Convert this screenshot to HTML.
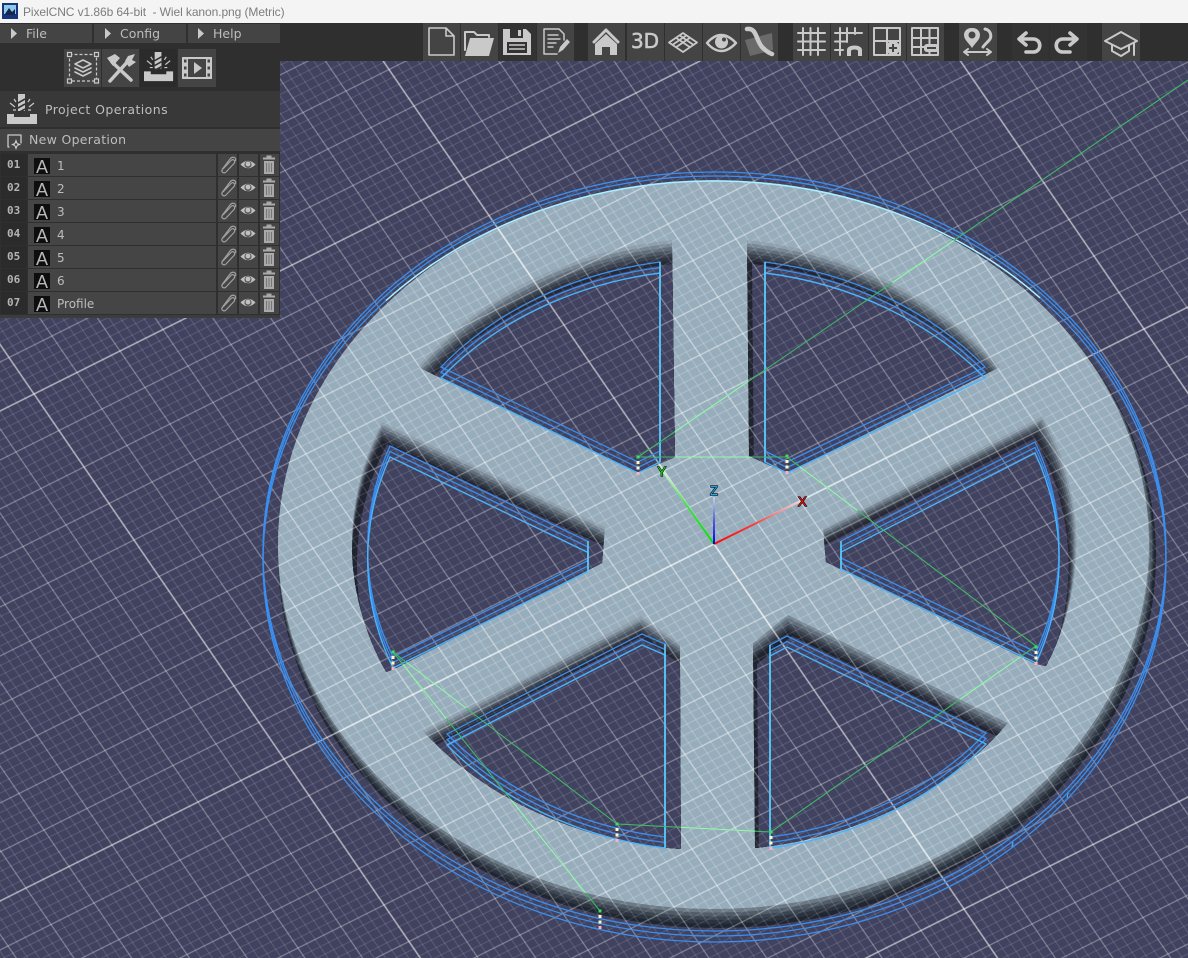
<!DOCTYPE html>
<html><head><meta charset="utf-8"><title>PixelCNC</title>
<style>
html,body{margin:0;padding:0;background:#40425f;overflow:hidden}
svg{display:block;position:absolute;left:0;top:0}
text{font-family:"DejaVu Sans","Liberation Sans",sans-serif;fill:#bdbdbd;font-size:12px}
.t{font-family:"Liberation Sans",sans-serif;fill:#7c7c7c;font-size:12px;white-space:pre;letter-spacing:-.08px}
.n{font-family:"DejaVu Sans Mono","Liberation Mono",monospace;font-weight:bold;font-size:11px;fill:#b4b4b4}
.ax{font-family:"Liberation Sans",sans-serif;font-size:13px;paint-order:stroke;stroke:#0a0a0a;stroke-width:1.2px}
.b{fill:#444}.d{fill:#333}
.ic{fill:none;stroke:#c9c9c9;stroke-width:2;stroke-linecap:round;stroke-linejoin:round}
.if{fill:#c9c9c9}
.w{fill:none;stroke:#3a8ff0;stroke-width:1.3}
.c{fill:none;stroke:#5cd0ff;stroke-width:1.5}
</style></head><body>
<svg width="1188" height="958" viewBox="0 0 1188 958" xmlns="http://www.w3.org/2000/svg">
<defs>
<path id="vm" d="M2 0V100M4 0V100M6 0V100M8 0V100M12 0V100M14 0V100M16 0V100M18 0V100M22 0V100M24 0V100M26 0V100M28 0V100M32 0V100M34 0V100M36 0V100M38 0V100M42 0V100M44 0V100M46 0V100M48 0V100M52 0V100M54 0V100M56 0V100M58 0V100M62 0V100M64 0V100M66 0V100M68 0V100M72 0V100M74 0V100M76 0V100M78 0V100M82 0V100M84 0V100M86 0V100M88 0V100M92 0V100M94 0V100M96 0V100M98 0V100" stroke="#fff" stroke-opacity=".15" stroke-width=".2" fill="none"/>
<path id="vd" d="M10 0V100M20 0V100M30 0V100M40 0V100M50 0V100M60 0V100M70 0V100M80 0V100M90 0V100" stroke="#fff" stroke-opacity=".34" stroke-width=".26" fill="none"/>
<path id="vj" d="M0 0V100M100 0V100" stroke="#fff" stroke-opacity=".6" stroke-width=".32" fill="none"/>
<pattern id="grid" patternUnits="userSpaceOnUse" width="100" height="100" patternTransform="matrix(4.3 -2.15 -2.5 -3.65 714 544)">
<use href="#vm"/><use href="#vm" transform="matrix(0 1 1 0 0 0)"/>
<use href="#vd"/><use href="#vd" transform="matrix(0 1 1 0 0 0)"/>
<use href="#vj"/><use href="#vj" transform="matrix(0 1 1 0 0 0)"/>
</pattern>
<path id="h1" d="M672 240A365 305 0 0 0 418 367L638 473L675 457Z"/>
<path id="h2" d="M747 240A365 305 0 0 1 1000 367L787 473L749 456Z"/>
<path id="h3" d="M382 422A365 305 0 0 0 386 672L394 669L602 563L605 527Z"/>
<path id="h4" d="M1043 416A365 305 0 0 1 1046 666L1036 664L826 562L823 528Z"/>
<path id="h5" d="M641 616L680 643L681 849A365 305 0 0 1 423 731Z"/>
<path id="h6" d="M788 615L753 643L755 848A365 305 0 0 0 1008 723Z"/>
<clipPath id="c1"><use href="#h1"/></clipPath>
<clipPath id="c2"><use href="#h2"/></clipPath>
<clipPath id="c3"><use href="#h3"/></clipPath>
<clipPath id="c4"><use href="#h4"/></clipPath>
<clipPath id="c5"><use href="#h5"/></clipPath>
<clipPath id="c6"><use href="#h6"/></clipPath>
<clipPath id="top"><path clip-rule="evenodd" d="M278 544.5A435.5 364.5 0 1 1 1149 544.5A435.5 364.5 0 1 1 278 544.5ZM672 240A365 305 0 0 0 418 367L638 473L675 457ZM747 240A365 305 0 0 1 1000 367L787 473L749 456ZM382 422A365 305 0 0 0 386 672L394 669L602 563L605 527ZM1043 416A365 305 0 0 1 1046 666L1036 664L826 562L823 528ZM641 616L680 643L681 849A365 305 0 0 1 423 731ZM788 615L753 643L755 848A365 305 0 0 0 1008 723Z"/></clipPath>
<path id="w1" d="M660 273A350 292 0 0 0 441 378L638 473L660 462Z"/>
<path id="w2" d="M765 273A350 292 0 0 1 985 378L787 473L765 462Z"/>
<path id="w3" d="M393 668A345 289 0 0 1 390 457L588 552.5V571.5Z"/>
<path id="w4" d="M1036 663A345 289 0 0 0 1035 453L841 552V569Z"/>
<path id="w5" d="M665 848A345 289 0 0 1 447 745L642 645L665 655Z"/>
<path id="w6" d="M770 848A345 289 0 0 0 986 744L787 647L770 656Z"/>
<g id="dots"><rect x="-1.500" y="-1.500" width="3" height="3" fill="#3be060"/><rect x="-1.500" y="4" width="3" height="3" fill="#fff7c8"/><rect x="-1.500" y="9.500" width="3" height="3" fill="#fff7c8"/><rect x="-1.500" y="15" width="3" height="3" fill="#ffb0c0"/></g>
<linearGradient id="gr" gradientUnits="userSpaceOnUse" x1="714" y1="544" x2="803" y2="500"><stop offset="0" stop-color="#ff0000"/><stop offset=".45" stop-color="#f04040"/><stop offset="1" stop-color="#f0e0e4"/></linearGradient>
<linearGradient id="gg" gradientUnits="userSpaceOnUse" x1="714" y1="544" x2="662" y2="470"><stop offset="0" stop-color="#00e000"/><stop offset=".5" stop-color="#40e040"/><stop offset="1" stop-color="#d8f0dc"/></linearGradient>
<linearGradient id="gb" gradientUnits="userSpaceOnUse" x1="714" y1="544" x2="714" y2="497"><stop offset="0" stop-color="#0000f0"/><stop offset=".5" stop-color="#5060d8"/><stop offset="1" stop-color="#c8d4e8"/></linearGradient>

<g id="mill">
<path class="if" d="M11 0H18V17H11Z"/>
<path d="M11 9L18 5M11 14L18 10M11 19L18 15" stroke="#333" stroke-width="1.6" fill="none"/>
<path d="M3 9L8 13M27 9L22 13M6 16H9M24 16H21M7 5L9 8M23 5L21 8" stroke="#c9c9c9" stroke-width="1.2" fill="none"/>
<path class="if" d="M0 20H7V23H23V20H30V30H0Z"/>
</g>
<g id="row">
<rect x="1" y="0" width="26" height="22" fill="#2b2b2b"/>
<rect x="28" y="0" width="188" height="22" fill="#454545"/>
<rect x="218" y="0" width="19" height="22" fill="#454545"/>
<rect x="239" y="0" width="19" height="22" fill="#454545"/>
<rect x="260" y="0" width="19" height="22" fill="#454545"/>
<rect x="34" y="4" width="16" height="16" fill="#0e0e0e"/>
<text x="42" y="19" text-anchor="middle" style="font-family:'Liberation Sans',sans-serif;font-size:18px;fill:#b8b8b8">A</text>
<path d="M223 15L231 6.500C233 4.500 236 6.500 234 9.500L226 18C224 20 220.500 18 222.500 15L230 5C232 2 237 3 235.500 7" fill="none" stroke="#a0a0a0" stroke-width="1.200"/>
<path d="M240.500 10.500Q248 3 255.500 10.500Q248 18 240.500 10.500Z" fill="#c0c0c0"/>
<circle cx="248" cy="10.500" r="3.600" fill="#5a5a5a"/><circle cx="248" cy="10" r="2.400" fill="#c0c0c0"/>
<path d="M266.500 1.500H271.500V3.500H275V5.500H263V3.500H266.500Z" fill="#aaa"/>
<path d="M264 7H274V20H264Z" fill="#aaa"/>
<path d="M266.500 9V18M269 9V18M271.500 9V18" stroke="#777" stroke-width="1" fill="none"/>
</g>
</defs>

<!-- scene -->
<rect width="1188" height="958" fill="#40425f"/>
<ellipse cx="717" cy="556" rx="439" ry="372" fill="#1f2632"/>
<ellipse cx="716" cy="553.500" rx="438" ry="370.500" fill="#2b333f"/>
<ellipse cx="715.500" cy="551" rx="437.500" ry="369" fill="#3b4551"/>
<ellipse cx="715" cy="549" rx="437" ry="367.500" fill="#505c68"/>
<ellipse cx="714" cy="546.600" rx="436" ry="366" fill="#6c7a86"/>
<ellipse cx="713.500" cy="544.500" rx="435.500" ry="364.500" fill="#98adbc"/>

<g clip-path="url(#c1)"><use href="#h1" fill="#8f9fac"/><use href="#h1" fill="#788794" transform="translate(.3 3.400)"/><use href="#h1" fill="#616e7b" transform="translate(.6 6.900)"/><use href="#h1" fill="#4c5663" transform="translate(.9 10.300)"/><use href="#h1" fill="#3b424f" transform="translate(1.100 13.700)"/><use href="#h1" fill="#2e323f" transform="translate(1.400 17.100)"/><use href="#h1" fill="#262935" transform="translate(1.700 20.600)"/><use href="#h1" fill="#40425f" transform="translate(2 24)"/></g>
<g clip-path="url(#c2)"><use href="#h2" fill="#8f9fac"/><use href="#h2" fill="#788794" transform="translate(0 3.400)"/><use href="#h2" fill="#616e7b" transform="translate(0 6.900)"/><use href="#h2" fill="#4c5663" transform="translate(0 10.300)"/><use href="#h2" fill="#3b424f" transform="translate(0 13.700)"/><use href="#h2" fill="#2e323f" transform="translate(0 17.100)"/><use href="#h2" fill="#1f2430" transform="translate(0 20.600)"/><use href="#h2" fill="#40425f" transform="translate(5 24)"/></g>
<g clip-path="url(#c3)"><use href="#h3" fill="#8f9fac"/><use href="#h3" fill="#788794" transform="translate(0 3)"/><use href="#h3" fill="#616e7b" transform="translate(0 6)"/><use href="#h3" fill="#4c5663" transform="translate(0 9)"/><use href="#h3" fill="#3b424f" transform="translate(0 12)"/><use href="#h3" fill="#2e323f" transform="translate(0 15)"/><use href="#h3" fill="#1f2430" transform="translate(0 18)"/><use href="#h3" fill="#40425f" transform="translate(5 22)"/></g>
<g clip-path="url(#c4)"><use href="#h4" fill="#8f9fac"/><use href="#h4" fill="#788794" transform="translate(-1.100 3.100)"/><use href="#h4" fill="#616e7b" transform="translate(-2.300 6.300)"/><use href="#h4" fill="#4c5663" transform="translate(-3.400 9.400)"/><use href="#h4" fill="#3b424f" transform="translate(-4.600 12.600)"/><use href="#h4" fill="#2e323f" transform="translate(-5.700 15.700)"/><use href="#h4" fill="#262935" transform="translate(-6.900 18.900)"/><use href="#h4" fill="#40425f" transform="translate(-8 22)"/></g>
<g clip-path="url(#c5)"><use href="#h5" fill="#8f9fac"/><use href="#h5" fill="#788794" transform="translate(0 3)"/><use href="#h5" fill="#616e7b" transform="translate(0 6)"/><use href="#h5" fill="#4c5663" transform="translate(0 9)"/><use href="#h5" fill="#3b424f" transform="translate(0 12)"/><use href="#h5" fill="#2e323f" transform="translate(0 15)"/><use href="#h5" fill="#262935" transform="translate(0 18)"/><use href="#h5" fill="#40425f" transform="translate(0 21)"/></g>
<g clip-path="url(#c6)"><use href="#h6" fill="#788794"/><use href="#h6" fill="#616e7b" transform="translate(0 3)"/><use href="#h6" fill="#4c5663" transform="translate(0 7)"/><use href="#h6" fill="#3b424f" transform="translate(0 10)"/><use href="#h6" fill="#2e323f" transform="translate(0 13)"/><use href="#h6" fill="#1f2430" transform="translate(0 16)"/><use href="#h6" fill="#40425f" transform="translate(4 21)"/></g>

<!-- grid -->
<rect width="1188" height="958" fill="url(#grid)"/>
<rect width="1188" height="958" fill="url(#grid)" clip-path="url(#top)" opacity=".6"/>

<!-- wires -->
<g id="wires">
<ellipse class="w" cx="714.500" cy="551.500" rx="451.500" ry="379.500"/>
<ellipse class="w" cx="714.500" cy="556" rx="451.500" ry="380"/>
<ellipse class="w" cx="714.500" cy="561.500" rx="451.500" ry="380.500"/>
<path d="M386 300.500A451.500 380.500 0 0 1 1040 297.800" fill="none" stroke="#a8f0ff" stroke-width="1.500"/>
<path d="M1013 842L1012 847M1068 793L1067 798" fill="none" stroke="#46a8ff" stroke-width="1.200"/>
<g class="w"><use href="#w1" transform="translate(0 -5.500)"/><use href="#w1" transform="translate(0 -11)"/><use href="#w2" transform="translate(0 -5.500)"/><use href="#w2" transform="translate(0 -11)"/><use href="#w3" transform="translate(0 -5.500)"/><use href="#w3" transform="translate(0 -11)"/><use href="#w4" transform="translate(0 -5.500)"/><use href="#w4" transform="translate(0 -11)"/><use href="#w5" transform="translate(0 -5.500)"/><use href="#w5" transform="translate(0 -11)"/><use href="#w6" transform="translate(0 -5.500)"/><use href="#w6" transform="translate(0 -11)"/></g>
<g style="fill:none;stroke:#48b4ff;stroke-width:1.4"><use href="#w1"/><use href="#w2"/><use href="#w3"/><use href="#w4"/><use href="#w5"/><use href="#w6"/></g>
<path class="c" d="M660 262V462M765 262V462M588 541V572M841 541V569M665 644V848M770 645V848"/>
</g>

<!-- rapid moves -->
<g fill="none" stroke-width="1.100" id="gl">
<path stroke="#3fb868" d="M1188 80L638 457H787L1036 646L771 832L617 824L393 652L600 911"/>
<path stroke="#98f8b0" clip-path="url(#top)" d="M1188 80L638 457H787L1036 646L771 832L617 824L393 652L600 911"/>
</g>
<use href="#dots" x="638" y="457"/><use href="#dots" x="787" y="456"/><use href="#dots" x="1036" y="647"/><use href="#dots" x="771" y="832"/><use href="#dots" x="617" y="824"/><use href="#dots" x="393" y="652"/><use href="#dots" x="600" y="911"/>

<!-- axes -->
<path d="M714 544L662 470" stroke="url(#gg)" stroke-width="2" fill="none"/>
<path d="M714 544L803 500" stroke="url(#gr)" stroke-width="2" fill="none"/>
<path d="M714 544V497" stroke="url(#gb)" stroke-width="2" fill="none"/>
<text class="ax" x="657.500" y="476" style="fill:#10e010">Y</text>
<text class="ax" x="798" y="506" style="fill:#f01010">X</text>
<text class="ax" x="710" y="495" style="fill:#18a8f0">Z</text>

<!-- title bar -->
<rect x="0" y="0" width="1188" height="23" fill="#f4f4f4"/>
<rect x="2" y="3" width="16" height="16" fill="#16367c"/>
<rect x="4" y="5" width="12" height="9" fill="#8fc8e8"/>
<path d="M5 14L9 8L12 12L15 9V15H5Z" fill="#12264e"/>
<text class="t" x="23" y="16">PixelCNC v1.86b 64-bit  - Wiel kanon.png (Metric)</text>

<!-- toolbar -->
<rect x="0" y="23" width="1188" height="38" fill="#2f2f2f"/>
<rect x="423" y="23" width="37" height="38" class="b"/><rect x="461" y="23" width="37" height="38" class="b"/><rect x="499" y="23" width="37" height="38" class="d"/><rect x="537" y="23" width="37" height="38" class="b"/>
<rect x="588" y="23" width="37" height="38" class="b"/><rect x="627" y="23" width="37" height="38" class="b"/><rect x="665" y="23" width="37" height="38" class="b"/><rect x="703" y="23" width="37" height="38" class="b"/><rect x="741" y="23" width="37" height="38" class="b"/>
<rect x="793" y="23" width="37" height="38" class="b"/><rect x="831" y="23" width="37" height="38" class="b"/><rect x="869" y="23" width="37" height="38" class="b"/><rect x="907" y="23" width="37" height="38" class="b"/>
<rect x="959" y="23" width="38" height="38" class="b"/>
<rect x="1012" y="23" width="37" height="38" class="d"/><rect x="1050" y="23" width="37" height="38" class="d"/>
<rect x="1102" y="23" width="38" height="38" class="b"/>

<!-- new doc -->
<path class="ic" d="M429 28H446L454 36V55H429ZM446 28V36H454" style="stroke-width:1.600"/>
<!-- open -->
<path class="if" d="M465 56L470 38H494L489 56Z"/>
<path class="ic" d="M465 50V32H474L477 35H489V37" style="stroke-width:2"/>
<!-- save -->
<path class="if" d="M503 29H526L531 34V55H503Z"/>
<rect x="510" y="29" width="13" height="9" fill="#333"/><rect x="518" y="30" width="3" height="6" class="if"/>
<rect x="507" y="42" width="20" height="11" fill="#333"/><path d="M509 45H525M509 49H525" stroke="#c9c9c9" stroke-width="1.600"/>
<!-- notes -->
<path class="ic" d="M557 54H544V29H559L564 34V40" style="stroke-width:1.500"/>
<path class="ic" d="M548 35H558M548 39H560M548 43H556M548 47H553" style="stroke-width:1.400"/>
<path class="if" d="M558 53L560 47L567 39L570 42L563 50Z"/>
<!-- home -->
<path class="ic" d="M594 42L606 30L618 42" style="stroke-width:3"/>
<path class="if" d="M595 44L606 34L617 44V55H610V47H602V55H595Z"/>
<!-- 3D -->
<text x="645" y="48" text-anchor="middle" style="font-size:20px;fill:#c9c9c9;stroke:#c9c9c9;stroke-width:.6px;font-family:'DejaVu Sans',sans-serif">3D</text>
<!-- plane -->
<path class="ic" d="M683 33L697 42.500L683 52L669 42.500ZM676 37.700L690 47.200M679.500 35.300L693.500 44.900M690 37.700L676 47.200M686.500 35.300L672.500 44.900" style="stroke-width:1.800"/>
<!-- eye -->
<path class="ic" d="M707 43Q721 27 736 43Q721 59 707 43Z" style="stroke-width:2.400"/>
<circle cx="721.500" cy="42" r="6.500" class="if"/><circle cx="724" cy="39.500" r="2" fill="#444"/>
<!-- toolpath -->
<path d="M745 40L772 33L773 50L750 56Z" fill="#6a6a6a"/>
<path d="M747 29C757 27 756 42 763 48C766 51 769 53 772 54" class="ic" style="stroke-width:4.500"/>
<!-- grids -->
<path class="ic" d="M803 28V55M810.500 28V55M818 28V55M798 33H825M798 41.500H825M798 50H825" style="stroke-width:2"/>
<path class="ic" d="M840 28V55M847 28V42M855 28V34M835 33H862M835 41.500H846M835 50H843" style="stroke-width:2"/>
<path class="if" d="M847 56V50C847 44 862 44 862 50V56H858V51C858 49 851 49 851 51V56Z"/>
<path class="ic" d="M874 28H900V55H874ZM887 28V55M874 41H900" style="stroke-width:2"/>
<circle cx="893" cy="48" r="7" class="if"/><path d="M889 48H897M893 44V52" stroke="#444" stroke-width="2"/>
<path class="ic" d="M912 28H938V55H912ZM921 28V55M929.500 28V55M912 38H938M912 47H938" style="stroke-width:2"/>
<rect x="924" y="44" width="15" height="8" rx="3" class="if"/><rect x="927" y="47" width="9" height="2" fill="#444"/>
<!-- map -->
<path class="if" d="M972 28C966 28 964 32 964 35C964 40 969 43 972 48C975 43 980 40 980 35C980 32 978 28 972 28Z"/>
<circle cx="972" cy="35" r="3.500" fill="#444"/>
<path class="ic" d="M985 29C990 30 992 35 990 39C988 42 985 44 983 47" style="stroke-width:3"/>
<path class="ic" d="M964 52H991M968 49L964 52L968 55M987 49L991 52L987 55" style="stroke-width:2"/>
<!-- undo redo -->
<path class="ic" d="M1026 33L1019 39L1026 45M1020 39H1033C1042 39 1042 52 1033 52H1026" style="stroke-width:3.600"/>
<path class="ic" d="M1070 33L1077 39L1070 45M1076 39H1063C1054 39 1054 52 1063 52H1070" style="stroke-width:3.600"/>
<!-- cap -->
<path class="ic" d="M1105 41L1121 32L1137 41L1121 49Z" style="stroke-width:2"/>
<path class="ic" d="M1112 45V51L1121 56L1129 51V45M1134 43V55" style="stroke-width:2"/>

<!-- left panel -->
<rect x="0" y="23" width="280" height="295" fill="#2f2f2f"/>
<rect x="0" y="24" width="92" height="19" fill="#444"/><rect x="94" y="24" width="92" height="19" fill="#444"/><rect x="188" y="24" width="92" height="19" fill="#444"/>
<path class="if" d="M11 28L17 33.500L11 39Z"/><path class="if" d="M105 28L111 33.500L105 39Z"/><path class="if" d="M198 28L204 33.500L198 39Z"/>
<text x="26" y="38" style="font-size:12.500px">File</text>
<text x="120" y="38" style="font-size:12.500px">Config</text>
<text x="213" y="38" style="font-size:12.500px">Help</text>

<rect x="64" y="49" width="37" height="38" class="b"/><rect x="102" y="49" width="37" height="38" class="b"/><rect x="140" y="49" width="37" height="38" fill="#2b2b2b"/><rect x="178" y="49" width="38" height="38" class="b"/>
<!-- select layers -->
<rect x="69.500" y="54.500" width="27" height="26.500" fill="none" stroke="#c9c9c9" stroke-width="1.200" stroke-dasharray="3 2"/>
<path d="M67.500 52.500h4v4h-4zM94.500 52.500h4v4h-4zM67.500 79h4v4h-4zM94.500 79h4v4h-4z" fill="#444" stroke="#c9c9c9" stroke-width="1.200"/>
<path class="ic" d="M83 60L91 64L83 68L75 64ZM75 68L83 72L91 68M75 72L83 76L91 72" style="stroke-width:1.600"/>
<!-- tools -->
<path class="ic" d="M110 81L129 60" style="stroke-width:3.500"/>
<path class="ic" d="M112 62L131 80" style="stroke-width:3.500"/>
<path class="if" d="M107 58L115 54L120 58L113 66Z"/>
<path class="if" d="M128 56L135 54L132 60L136 62L129 67L125 61Z"/>
<!-- mill -->
<use href="#mill" transform="translate(144 52) scale(.97)"/>
<!-- film -->
<rect x="182" y="57" width="30" height="22" class="if"/>
<rect x="188" y="59" width="18" height="18" fill="#444"/>
<path class="if" d="M194 62L202 68L194 74Z"/>
<path d="M184 59.500h2.500v3h-2.500zM184 66.500h2.500v3h-2.500zM184 73.500h2.500v3h-2.500zM207.500 59.500h2.500v3h-2.500zM207.500 66.500h2.500v3h-2.500zM207.500 73.500h2.500v3h-2.500z" fill="#444"/>

<!-- section header -->
<rect x="0" y="91" width="280" height="36" fill="#383838"/>
<use href="#mill" transform="translate(7 94)"/>
<text x="45" y="114" style="font-size:12.500px;letter-spacing:.42px">Project Operations</text>

<rect x="0" y="129" width="280" height="22" fill="#444"/>
<path class="ic" d="M9 147H8V135H21V143" style="stroke-width:1.300"/>
<path class="if" d="M16 139L17.500 143L21 144.500L17.500 146L16 150L14.500 146L11 144.500L14.500 143Z"/>
<circle cx="16" cy="144.500" r="1.300" fill="#444"/>
<text x="29" y="144" style="font-size:12.500px;letter-spacing:.3px">New Operation</text>

<use href="#row" y="154"/><use href="#row" y="177"/><use href="#row" y="200"/><use href="#row" y="223"/><use href="#row" y="246"/><use href="#row" y="269"/><use href="#row" y="292"/>
<rect x="0" y="315" width="280" height="3" fill="#3c3c3c"/>
<text class="n" x="7" y="168">01</text><text class="n" x="7" y="191">02</text><text class="n" x="7" y="214">03</text><text class="n" x="7" y="237">04</text><text class="n" x="7" y="260">05</text><text class="n" x="7" y="283">06</text><text class="n" x="7" y="306">07</text>
<text x="57" y="170">1</text><text x="57" y="193">2</text><text x="57" y="216">3</text><text x="57" y="239">4</text><text x="57" y="262">5</text><text x="57" y="285">6</text><text x="57" y="308">Profile</text>
</svg>
</body></html>
